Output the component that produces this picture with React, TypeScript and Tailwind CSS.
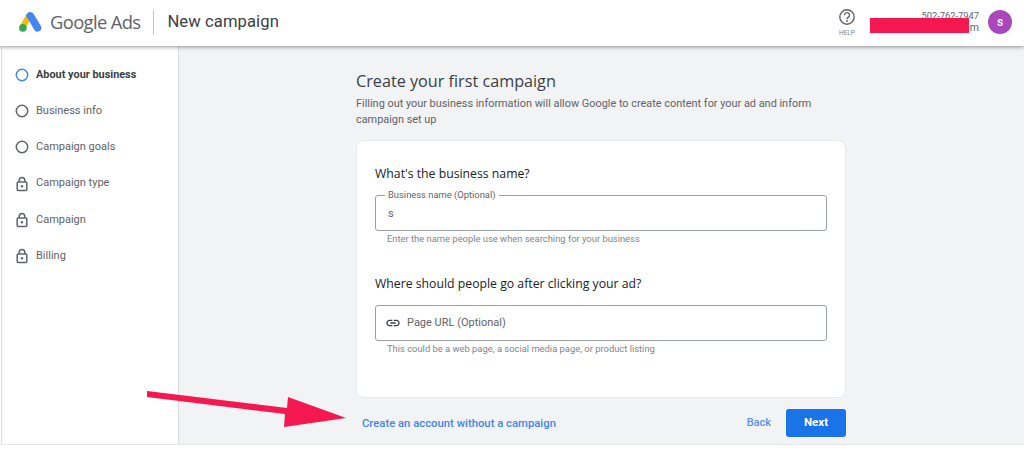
import React from "react";

function Circle({ blue }: { blue?: boolean }) {
  return (
    <svg width="14" height="14" viewBox="0 0 14 14" className="shrink-0">
      <circle cx="7" cy="7" r="5.7" fill="none" stroke={blue ? "#4285f4" : "#5f6368"} strokeWidth="1.5" />
    </svg>
  );
}

function Lock() {
  return (
    <svg width="14" height="16" viewBox="0 0 14 16" className="shrink-0">
      <path d="M4.2 6V4.2a2.8 2.8 0 0 1 5.6 0V6" fill="none" stroke="#5f6368" strokeWidth="1.5" />
      <rect x="2.2" y="6" width="9.6" height="8.6" rx="1" fill="none" stroke="#5f6368" strokeWidth="1.5" />
      <circle cx="7" cy="10.3" r="1.2" fill="#5f6368" />
    </svg>
  );
}

const steps: { label: string; kind: "active" | "open" | "lock" }[] = [
  { label: "About your business", kind: "active" },
  { label: "Business info", kind: "open" },
  { label: "Campaign goals", kind: "open" },
  { label: "Campaign type", kind: "lock" },
  { label: "Campaign", kind: "lock" },
  { label: "Billing", kind: "lock" },
];

export default function App() {
  return (
    <div className="relative flex h-[451px] w-[1024px] flex-col overflow-hidden bg-white font-['Roboto',sans-serif]">
      <header className="z-10 flex h-[46px] shrink-0 items-center bg-white pb-[2px] pl-[18px] pr-[12px] shadow-[0_1px_4px_rgba(60,64,67,0.55)]">
        <svg width="24" height="22" viewBox="0 0 24 22" className="shrink-0">
          <path d="M8.6 3.2 1.9 14.8l5.2 3 6.6-11.5z" fill="#fbbc04" />
          <path d="M15.6 3.1a3.9 3.9 0 0 0-6.9 0c-.9 1.8-.3 3.9 1.4 5l6.1 10.6a3.9 3.9 0 0 0 5.3 1.4c1.9-1 2.5-3.4 1.4-5.2z" fill="#4285f4" />
          <circle cx="4.9" cy="16.9" r="3.8" fill="#34a853" />
        </svg>
        <span className="ml-[8px] font-['Open_Sans',sans-serif] text-[18.4px] leading-none tracking-[-0.65px] text-[#5f6368]">Google Ads</span>
        <div className="ml-[13px] h-[25px] w-px bg-[#c4c7c9]" />
        <span className="ml-[13px] text-[16.6px] tracking-[0.1px] text-[#3c4043]">New campaign</span>
        <div className="ml-auto flex flex-col items-center">
          <svg width="18" height="18" viewBox="0 0 18 18">
            <circle cx="9" cy="9" r="7.2" fill="none" stroke="#5f6368" strokeWidth="1.4" />
            <path d="M6.5 7.2a2.5 2.5 0 1 1 3.9 2c-.9.6-1.4 1-1.4 2" fill="none" stroke="#5f6368" strokeWidth="1.4" />
            <circle cx="9" cy="13" r=".9" fill="#5f6368" />
          </svg>
          <span className="mt-[3px] text-[6.5px] leading-[8px] text-[#80868b]">HELP</span>
        </div>
        <div className="ml-[63px] flex w-[60px] flex-col items-end text-[9.3px] leading-[12px] text-[#5f6368]">
          <span>502-762-7947</span>
          <span className="text-[10.5px]">m</span>
        </div>
        <div className="ml-[9px] flex h-6 w-6 items-center justify-center rounded-full bg-[#ab47bc] text-[12px] font-medium text-white">s</div>
      </header>

      <div className="flex min-h-0 flex-1">
        <aside className="ml-[1px] flex w-[178px] shrink-0 flex-col gap-[18.2px] border-x border-[#dadce0] bg-white pl-[13px] pt-[20px]">
          {steps.map((s) => (
            <div key={s.label} className="flex h-[18px] items-center gap-[7px]">
              <span className="flex w-[14px] justify-center">
                {s.kind === "lock" ? <Lock /> : <Circle blue={s.kind === "active"} />}
              </span>
              <span className={s.kind === "active" ? "text-[10.9px] font-bold text-[#3c4043]" : "text-[11px] text-[#5f6368]"}>
                {s.label}
              </span>
            </div>
          ))}
        </aside>

        <main className="flex flex-1 justify-center bg-[#f1f3f4] pr-[1px] pt-[24px]">
          <div className="flex w-[490px] flex-col">
            <h1 className="font-['Open_Sans',sans-serif] text-[16.2px] leading-[22px] text-[#3c4043]">Create your first campaign</h1>
            <p className="mt-[4px] text-[10.9px] leading-[16px] text-[#5f6368]">
              Filling out your business information will allow Google to create content for your ad and inform
              <br />
              campaign set up
            </p>
            <section className="mt-[12px] flex h-[258px] flex-col rounded-[8px] border border-[#e8eaed] bg-white px-[18px] pt-[25px]">
              <h2 className="font-['Open_Sans',sans-serif] text-[12.25px] font-medium leading-[16px] text-[#202124]">What&apos;s the business name?</h2>
              <fieldset className="mt-[8px] h-[41px] rounded-[3px] border border-[#9aa0a6] pl-[9px]">
                <legend className="px-[3px] text-[9.4px] leading-[10px] text-[#5f6368]">Business name (Optional)</legend>
                <div className="pl-[3px] pt-[7px] text-[11px] leading-[14px] text-[#5f6368]">s</div>
              </fieldset>
              <p className="ml-[12px] mt-[2px] text-[9.4px] leading-[12px] text-[#80868b]">Enter the name people use when searching for your business</p>
              <h2 className="mt-[31px] font-['Open_Sans',sans-serif] text-[12.25px] font-medium leading-[16px] text-[#202124]">Where should people go after clicking your ad?</h2>
              <div className="mt-[13px] flex h-[36px] items-center rounded-[3px] border border-[#9aa0a6] pl-[9px]">
                <svg width="16" height="16" viewBox="0 0 24 24" fill="#3c4043" className="shrink-0">
                  <path d="M17 7h-4v2h4c1.65 0 3 1.35 3 3s-1.35 3-3 3h-4v2h4c2.76 0 5-2.24 5-5s-2.24-5-5-5zm-6 8H7c-1.65 0-3-1.35-3-3s1.35-3 3-3h4V7H7c-2.76 0-5 2.24-5 5s2.24 5 5 5h4v-2zm-3-4h8v2H8z" />
                </svg>
                <span className="ml-[6px] mt-[1px] text-[11px] text-[#5f6368]">Page URL (Optional)</span>
              </div>
              <p className="ml-[12px] mt-[2px] text-[9.4px] leading-[12px] text-[#80868b]">This could be a web page, a social media page, or product listing</p>
            </section>
            <div className="mt-[11px] flex items-center">
              <a className="ml-[6px] mt-[2px] text-[11.3px] font-medium text-[#4285f4]">Create an account without a campaign</a>
              <a className="ml-auto text-[11px] font-medium text-[#5c8fee]">Back</a>
              <button className="ml-[15px] h-[28px] w-[60px] rounded-[3px] bg-[#1a73e8] text-[11.5px] font-bold text-white">Next</button>
            </div>
          </div>
        </main>
      </div>
      <div className="h-[7px] shrink-0 border-t border-[#e4e6e8] bg-white" />

      <div className="absolute left-[870px] top-[18px] z-20 h-[15px] w-[99px] bg-[#f5174f]" />
      <svg width="1024" height="451" viewBox="0 0 1024 451" className="pointer-events-none absolute left-0 top-0 z-20">
        <polygon points="147,391 287,408 288,397 346,418 284,427 285,414 147,397" fill="#f5174f" />
      </svg>
    </div>
  );
}
